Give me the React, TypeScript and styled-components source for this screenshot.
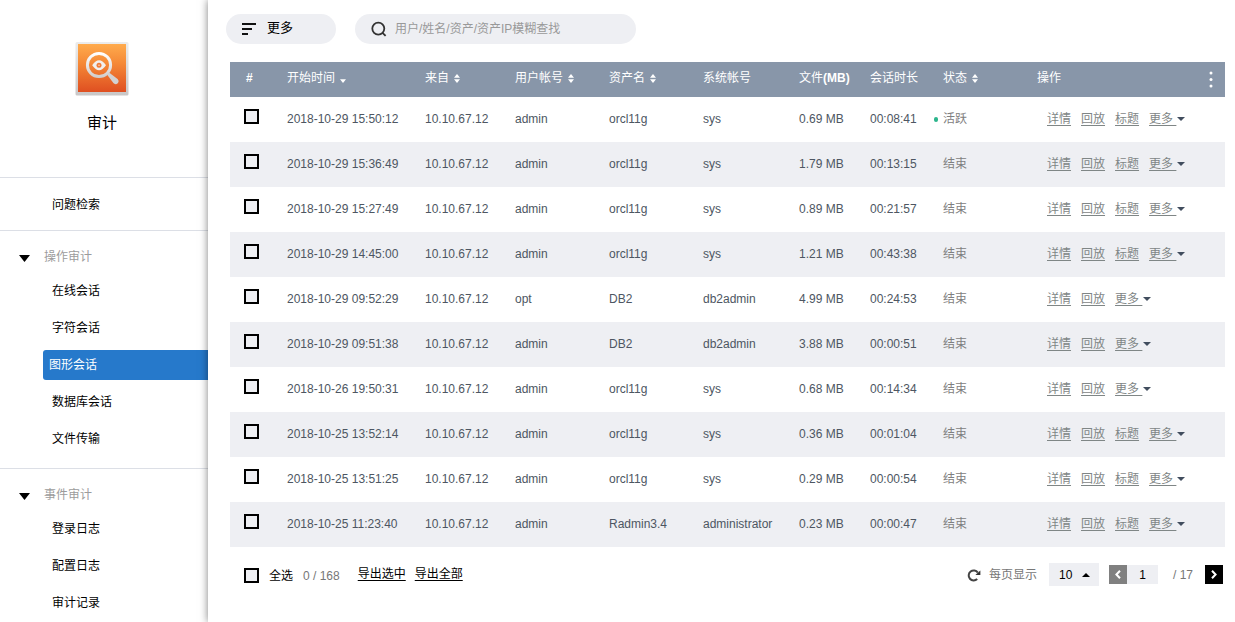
import React from 'react';
import styled, { createGlobalStyle } from 'styled-components';

const GlobalStyle = createGlobalStyle`
  *, *::before, *::after { box-sizing: border-box; }
  body {
    margin: 0;
    background: #fff;
    color: #000;
    font-family: "Liberation Sans", "Noto Sans CJK SC", sans-serif;
    font-size: 12px;
    line-height: 20px;
  }
  button, input, select { font: inherit; color: inherit; }
  button { border: 0; padding: 0; background: none; cursor: pointer; }
  ul { list-style: none; margin: 0; padding: 0; }
  h1, h2 { margin: 0; font-weight: 400; }
`;

const Page = styled.div`
  display: flex;
  min-height: 100vh;
`;

/* ---------- sidebar ---------- */

const Sidebar = styled.aside`
  flex: 0 0 208px;
`;

const Brand = styled.header`
  display: flex;
  flex-direction: column;
  align-items: center;
  height: 177px;
  padding: 42px 4px 0 0;
`;

const BrandName = styled.h1`
  margin-top: 16px;
  font-size: 15px;
  line-height: 22px;
`;

const Section = styled.section`
  border-top: 1px solid #dcdfe6;
  padding: 16px 0 14px;

  &:last-child { padding-bottom: 0; }
`;

const SectionTitle = styled.button`
  display: flex;
  align-items: center;
  margin-bottom: 9px;
  padding-left: 19px;
  gap: 14px;
  color: #9c9c9c;

  svg { margin-top: 3px; }
`;

const NavList = styled.ul`
  display: flex;
  flex-direction: column;
  gap: 7px;
`;

const NavLink = styled.a<{ $active?: boolean }>`
  display: block;
  margin-left: 43px;
  padding: 5px 0 5px ${(p) => (p.$active ? 6 : 9)}px;
  border-radius: 3px 0 0 3px;
  background: ${(p) => (p.$active ? '#2679cb' : 'transparent')};
  color: ${(p) => (p.$active ? '#fff' : '#000')};
  text-decoration: none;
`;

const SearchSection = styled(Section)`
  padding: 12px 0 10px;
`;

/* ---------- main ---------- */

const Main = styled.main`
  position: relative;
  flex: 1;
  min-width: 0;
  padding: 14px 10px 0 18px;
  background: #fff;
  box-shadow: 0 0 8px rgba(0, 0, 0, 0.5);
`;

const Toolbar = styled.div`
  display: flex;
  gap: 19px;
  margin-bottom: 18px;
`;

const MoreButton = styled.button`
  display: flex;
  align-items: center;
  width: 110px;
  height: 30px;
  padding: 0 16px 2px;
  gap: 11px;
  border-radius: 15px;
  background: #eeeff3;
  font-size: 13px;
  svg { margin-top: 2px; }
`;

const SearchBox = styled.label`
  display: flex;
  align-items: center;
  width: 281px;
  height: 30px;
  padding: 0 16px;
  gap: 8px;
  border-radius: 15px;
  background: #eeeff3;
`;

const SearchInput = styled.input`
  flex: 1;
  min-width: 0;
  height: 28px;
  padding: 0;
  border: 0;
  outline: 0;
  background: transparent;
  &::placeholder { color: #999; opacity: 1; }
`;

const Content = styled.div`
  margin-left: 4px;
`;

const Table = styled.table`
  width: 100%;
  table-layout: fixed;
  border-collapse: collapse;
  color: #4d5662;
`;

const HeadCell = styled.th<{ $inset?: number }>`
  height: 35px;
  padding: 0 0 4px ${(p) => p.$inset ?? 0}px;
  background: #8896a9;
  color: #fff;
  font-weight: 400;
  text-align: left;
  white-space: nowrap;
`;

const HeadInner = styled.div<{ $spread?: boolean }>`
  display: flex;
  align-items: center;
  gap: 5px;
  justify-content: ${(p) => (p.$spread ? 'space-between' : 'flex-start')};
`;

const SortButton = styled.button`
  display: flex;
  align-items: center;
  gap: 5px;
  svg { margin-top: 1px; }
`;

const MenuButton = styled.button`
  display: flex;
  justify-content: center;
  width: 9px;
  margin-right: 10px;
  svg { margin-top: 3px; }
`;

const Row = styled.tr`
  height: 45px;
  &:nth-child(even) { background: #eeeff3; }
`;

const Cell = styled.td<{ $inset?: number }>`
  padding: 0 0 1px ${(p) => p.$inset ?? 0}px;
  white-space: nowrap;
`;

const CheckCell = styled(Cell)`
  padding: 0 0 6px 14px;
`;

const Checkbox = styled.input`
  appearance: none;
  display: block;
  width: 15px;
  height: 15px;
  margin: 0;
  border: 2px solid #000;
  background: #eeeff3;
  &:checked { background: #000; box-shadow: inset 0 0 0 2px #eeeff3; }
`;

const Status = styled.span`
  display: flex;
  align-items: center;
  color: #7f8080;
`;

const DotSlot = styled.span`
  display: flex;
  width: 14px;
  padding-left: 5px;
`;

const Dot = styled.span`
  width: 4px;
  height: 5px;
  border-radius: 2px;
  background: #2cb58c;
`;

const Actions = styled.div`
  display: flex;
  align-items: center;
  gap: 10px;
`;

const ActionLink = styled.a`
  color: #7f8686;
  text-decoration: underline;
  text-underline-offset: 2px;
`;

const ActionMore = styled.button`
  display: flex;
  align-items: center;
  gap: 1px;
  color: #7f8686;
  span { text-decoration: underline; text-underline-offset: 2px; }
`;

/* ---------- footer ---------- */

const Footer = styled.footer`
  display: flex;
  align-items: center;
  justify-content: space-between;
  height: 57px;
  padding: 0 2px 2px 14px;
`;

const FooterGroup = styled.div`
  display: flex;
  align-items: center;
`;

const SelectAll = styled.label`
  display: flex;
  align-items: center;
  gap: 10px;
  padding-top: 2px;
`;

const Muted = styled.span`
  color: #777;
`;

const Count = styled(Muted)`
  padding: 2px 18px 0 10px;
`;

const ExportLink = styled.a`
  margin-right: 9px;
  padding-bottom: 2px;
  color: #000;
  text-decoration: underline;
  text-underline-offset: 2px;
`;

const RefreshButton = styled.button`
  display: flex;
  margin-right: 8px;
`;

const PageSize = styled.label`
  display: flex;
  align-items: center;
  gap: 12px;
`;

const SelectBox = styled.span`
  display: flex;
  align-items: center;
  width: 50px;
  height: 23px;
  padding: 0 9px 0 10px;
  background: #eeeff3;
  svg { flex: none; pointer-events: none; }
`;

const Select = styled.select`
  appearance: none;
  flex: 1;
  min-width: 0;
  padding: 0;
  border: 0;
  outline: 0;
  background: transparent;
`;

const Pager = styled.div`
  display: flex;
  align-items: center;
  margin-left: 10px;
`;

const PageButton = styled.button<{ $muted?: boolean }>`
  display: flex;
  align-items: center;
  justify-content: center;
  width: 18px;
  height: 19px;
  background: ${(p) => (p.$muted ? '#808080' : '#000')};
`;

const PageInput = styled.input`
  width: 31px;
  height: 19px;
  padding: 0;
  border: 0;
  outline: 0;
  background: #eeeff3;
  text-align: center;
`;

const PageTotal = styled(Muted)`
  padding: 0 12px 0 15px;
`;

/* ---------- icons ---------- */

const LogoIcon = () => (
  <svg width="54" height="54" viewBox="0 0 54 54" aria-hidden="true">
    <defs>
      <linearGradient id="tile" x1="0" y1="0" x2="0" y2="1">
        <stop offset="0" stopColor="#ffab4d" />
        <stop offset="0.4" stopColor="#f58937" />
        <stop offset="1" stopColor="#df4f21" />
      </linearGradient>
      <linearGradient id="frame" x1="0" y1="0" x2="0" y2="1">
        <stop offset="0" stopColor="#ececec" />
        <stop offset="1" stopColor="#c9c7c7" />
      </linearGradient>
      <linearGradient id="glass" x1="0" y1="0" x2="0" y2="1">
        <stop offset="0" stopColor="#ffffff" />
        <stop offset="1" stopColor="#d2cfce" />
      </linearGradient>
    </defs>
    <rect x="0.5" y="0" width="53" height="53.5" rx="1.5" fill="url(#frame)" />
    <rect x="3" y="2" width="48" height="48" fill="url(#tile)" />
    <circle cx="24" cy="23" r="11.6" fill="none" stroke="url(#glass)" strokeWidth="3" />
    <path d="M17.200 23.200Q24 13.200 31 23.200Q24 33.200 17.200 23.200Z" fill="#f1efee" />
    <circle cx="24" cy="23.200" r="2.500" fill="#ef7a38" />
    <circle cx="24" cy="23.200" r="0.800" fill="#f6d8c8" />
    <path d="M32 32.500l2-2 8.600 6.600q2 2 .4 4t-4.400.2z" fill="#d3d1d1" />
  </svg>
);

const GroupCaret = () => (
  <svg width="11" height="7" viewBox="0 0 11 7" aria-hidden="true">
    <path d="M0 0h11L5.500 7z" fill="#000" />
  </svg>
);

const FilterIcon = () => (
  <svg width="14" height="12" viewBox="0 0 14 12" aria-hidden="true">
    <path d="M0 0h14v2H0zM0 5h10v2H0zM0 10h6v2H0z" fill="#111" />
  </svg>
);

const SearchIcon = () => (
  <svg width="16" height="16" viewBox="0 0 16 16" fill="none" stroke="#333" strokeWidth="1.800" aria-hidden="true">
    <circle cx="7.300" cy="7.600" r="6" />
    <path d="M11.300 11.600L14.600 14.800" />
  </svg>
);

const SortIcon = ({ single = false }: { single?: boolean }) => (
  <svg width="6" height="9" viewBox="0 0 6 9" fill="#fff" aria-hidden="true">
    {!single && <path d="M0 3.800L3 0l3 3.800z" />}
    <path d="M0 5.200h6L3 9z" />
  </svg>
);

const DotsIcon = () => (
  <svg width="4" height="17" viewBox="0 0 4 17" fill="#fff" aria-hidden="true">
    <circle cx="2" cy="2" r="1.500" />
    <circle cx="2" cy="8.500" r="1.500" />
    <circle cx="2" cy="15" r="1.500" />
  </svg>
);

const Caret = ({ up = false }: { up?: boolean }) => (
  <svg width="8" height="4" viewBox="0 0 8 4" aria-hidden="true">
    {up ? <path d="M0 4L4 0l4 4z" fill="#000" /> : <path d="M0 0h8L4 4z" fill="#414d5e" />}
  </svg>
);

const RefreshIcon = () => (
  <svg width="14" height="14" viewBox="0 0 14 14" aria-hidden="true">
    <path d="M10.200 11A5 5 0 1 1 10.800 4.600" fill="none" stroke="#444" strokeWidth="2" />
    <path d="M13.400 2.400v4.600H8.400z" fill="#333" />
  </svg>
);

const Chevron = ({ left = false }: { left?: boolean }) => (
  <svg width="6" height="9" viewBox="0 0 6 9" fill="none" stroke="#fff" strokeWidth="2" aria-hidden="true">
    <path d={left ? 'M5 0.700L1.400 4.500L5 8.300' : 'M1 0.700L4.600 4.500L1 8.300'} />
  </svg>
);

/* ---------- data ---------- */

const groups = [
  { title: '操作审计', items: ['在线会话', '字符会话', '图形会话', '数据库会话', '文件传输'] },
  { title: '事件审计', items: ['登录日志', '配置日志', '审计记录'] },
];

const columnWidths = [57, 138, 90, 94, 94, 96, 71, 59, 108];

interface Session {
  start: string;
  user: string;
  asset: string;
  account: string;
  size: string;
  duration: string;
  active?: boolean;
  titled: boolean;
}

const session = (
  start: string, user: string, asset: string, account: string,
  size: string, duration: string, titled = true, active = false,
): Session => ({ start, user, asset, account, size, duration, titled, active });

const sessions: Session[] = [
  session('2018-10-29 15:50:12', 'admin', 'orcl11g', 'sys', '0.69 MB', '00:08:41', true, true),
  session('2018-10-29 15:36:49', 'admin', 'orcl11g', 'sys', '1.79 MB', '00:13:15'),
  session('2018-10-29 15:27:49', 'admin', 'orcl11g', 'sys', '0.89 MB', '00:21:57'),
  session('2018-10-29 14:45:00', 'admin', 'orcl11g', 'sys', '1.21 MB', '00:43:38'),
  session('2018-10-29 09:52:29', 'opt', 'DB2', 'db2admin', '4.99 MB', '00:24:53', false),
  session('2018-10-29 09:51:38', 'admin', 'DB2', 'db2admin', '3.88 MB', '00:00:51', false),
  session('2018-10-26 19:50:31', 'admin', 'orcl11g', 'sys', '0.68 MB', '00:14:34', false),
  session('2018-10-25 13:52:14', 'admin', 'orcl11g', 'sys', '0.36 MB', '00:01:04'),
  session('2018-10-25 13:51:25', 'admin', 'orcl11g', 'sys', '0.29 MB', '00:00:54'),
  session('2018-10-25 11:23:40', 'admin', 'Radmin3.4', 'administrator', '0.23 MB', '00:00:47'),
];

const Sortable = ({ label, single }: { label: string; single?: boolean }) => (
  <SortButton type="button">
    {label}
    <SortIcon single={single} />
  </SortButton>
);

export default function App() {
  return (
    <>
      <GlobalStyle />
      <Page>
        <Sidebar>
          <Brand>
            <LogoIcon />
            <BrandName>审计</BrandName>
          </Brand>
          <SearchSection>
            <NavLink href="#search">问题检索</NavLink>
          </SearchSection>
          {groups.map((group) => (
            <Section key={group.title}>
              <SectionTitle type="button" aria-expanded="true">
                <GroupCaret />
                {group.title}
              </SectionTitle>
              <NavList>
                {group.items.map((item) => (
                  <li key={item}>
                    <NavLink href={`#${item}`} $active={item === '图形会话'}>{item}</NavLink>
                  </li>
                ))}
              </NavList>
            </Section>
          ))}
        </Sidebar>

        <Main>
          <Toolbar>
            <MoreButton type="button">
              <FilterIcon />
              更多
            </MoreButton>
            <SearchBox>
              <SearchIcon />
              <SearchInput
                type="text"
                aria-label="查找"
                placeholder="用户/姓名/资产/资产IP模糊查找"
              />
            </SearchBox>
          </Toolbar>

          <Content>
            <Table>
              <colgroup>
                {columnWidths.map((width, i) => <col key={i} width={width} />)}
                <col />
              </colgroup>
              <thead>
                <tr>
                  <HeadCell $inset={16}><b>#</b></HeadCell>
                  <HeadCell><HeadInner><Sortable label="开始时间" single /></HeadInner></HeadCell>
                  <HeadCell><HeadInner><Sortable label="来自" /></HeadInner></HeadCell>
                  <HeadCell><HeadInner><Sortable label="用户帐号" /></HeadInner></HeadCell>
                  <HeadCell><HeadInner><Sortable label="资产名" /></HeadInner></HeadCell>
                  <HeadCell>系统帐号</HeadCell>
                  <HeadCell>文件<b>(MB)</b></HeadCell>
                  <HeadCell>会话时长</HeadCell>
                  <HeadCell $inset={14}><HeadInner><Sortable label="状态" /></HeadInner></HeadCell>
                  <HeadCell>
                    <HeadInner $spread>
                      操作
                      <MenuButton type="button" aria-label="列设置"><DotsIcon /></MenuButton>
                    </HeadInner>
                  </HeadCell>
                </tr>
              </thead>
              <tbody>
                {sessions.map((s) => (
                  <Row key={s.start}>
                    <CheckCell><Checkbox type="checkbox" aria-label={s.start} /></CheckCell>
                    <Cell>{s.start}</Cell>
                    <Cell>10.10.67.12</Cell>
                    <Cell>{s.user}</Cell>
                    <Cell>{s.asset}</Cell>
                    <Cell>{s.account}</Cell>
                    <Cell>{s.size}</Cell>
                    <Cell>{s.duration}</Cell>
                    <Cell>
                      <Status>
                        <DotSlot>{s.active && <Dot />}</DotSlot>
                        {s.active ? '活跃' : '结束'}
                      </Status>
                    </Cell>
                    <Cell $inset={10}>
                      <Actions>
                        <ActionLink href="#detail">详情</ActionLink>
                        <ActionLink href="#replay">回放</ActionLink>
                        {s.titled && <ActionLink href="#title">标题</ActionLink>}
                        <ActionMore type="button">
                          <span>更多&nbsp;</span>
                          <Caret />
                        </ActionMore>
                      </Actions>
                    </Cell>
                  </Row>
                ))}
              </tbody>
            </Table>

            <Footer>
              <FooterGroup>
                <SelectAll>
                  <Checkbox type="checkbox" />
                  全选
                </SelectAll>
                <Count>0 / 168</Count>
                <ExportLink href="#export-selected">导出选中</ExportLink>
                <ExportLink href="#export-all">导出全部</ExportLink>
              </FooterGroup>
              <FooterGroup>
                <RefreshButton type="button" aria-label="刷新"><RefreshIcon /></RefreshButton>
                <PageSize>
                  <Muted>每页显示</Muted>
                  <SelectBox>
                    <Select defaultValue="10">
                      <option>10</option>
                      <option>20</option>
                      <option>50</option>
                    </Select>
                    <Caret up />
                  </SelectBox>
                </PageSize>
                <Pager>
                  <PageButton type="button" $muted aria-label="上一页"><Chevron left /></PageButton>
                  <PageInput type="text" defaultValue="1" aria-label="页码" />
                  <PageTotal>/ 17</PageTotal>
                  <PageButton type="button" aria-label="下一页"><Chevron /></PageButton>
                </Pager>
              </FooterGroup>
            </Footer>
          </Content>
        </Main>
      </Page>
    </>
  );
}
